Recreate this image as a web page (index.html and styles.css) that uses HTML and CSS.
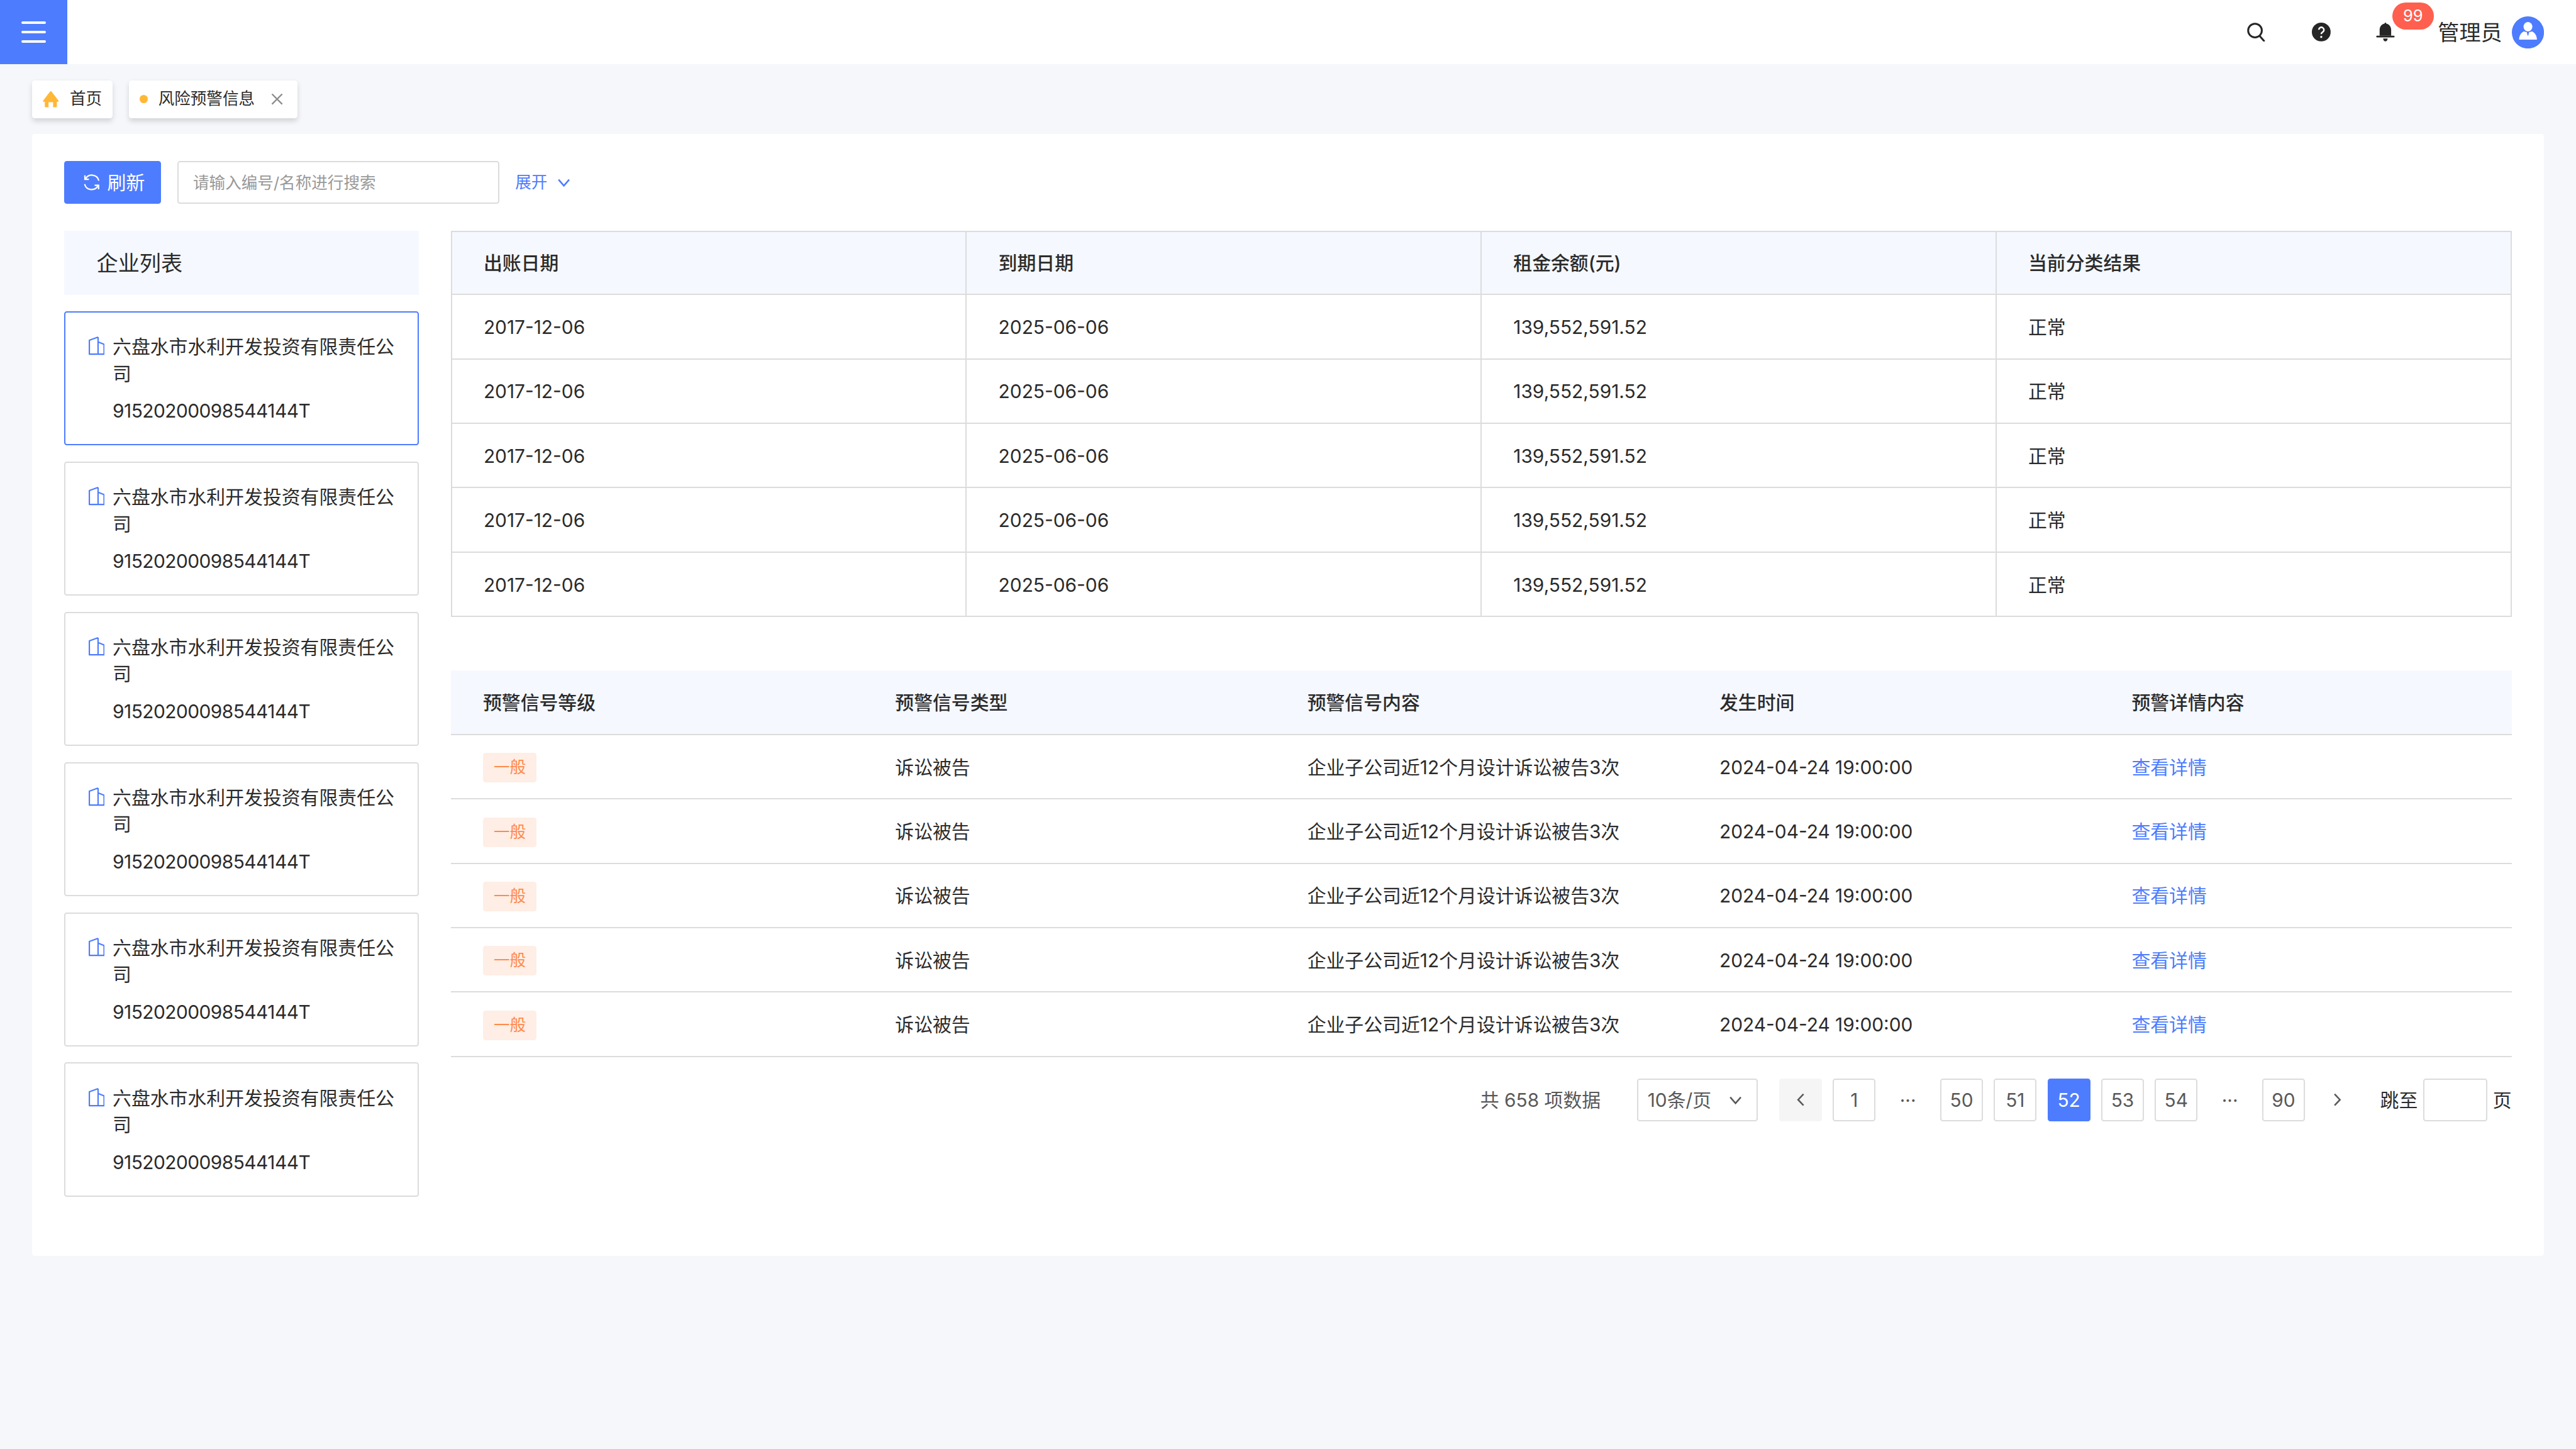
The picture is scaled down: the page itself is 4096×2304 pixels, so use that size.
FILE: index.html
```html
<!DOCTYPE html>
<html lang="zh-CN">
<head>
<meta charset="utf-8">
<title>风险预警信息</title>
<link rel="stylesheet" href="styles.css">
</head>
<body>
<header class="topbar">
  <button class="menu-btn" aria-label="菜单"><i></i><i></i><i></i></button>
  <div class="top-tools">
    <svg class="ic14" viewBox="0 0 14 14"><circle cx="5.9" cy="5.9" r="5.1" fill="none" stroke="#262626" stroke-width="1.4"/><path d="M9.4 10l3.2 3.6" fill="none" stroke="#262626" stroke-width="1.4" stroke-linecap="round"/></svg>
    <svg class="ic14" viewBox="0 0 14 14"><circle cx="7" cy="7" r="7" fill="#262626"/><path d="M5.2 5.3a1.9 1.9 0 1 1 2.9 1.7c-.7.4-1.1.8-1.1 1.5" fill="none" stroke="#fff" stroke-width="1.2"/><circle cx="7" cy="10.7" r=".8" fill="#fff"/></svg>
    <span class="bell">
      <svg class="ic14" viewBox="0 0 14 14"><path d="M7 0c.4 0 .6.3.6.7C9.900 1.200 11.300 3 11.300 5.400V9.700H2.700V5.400C2.700 3 4.100 1.200 6.400.7 6.400.3 6.600 0 7 0z" fill="#262626"/><rect x=".2" y="9.700" width="13.600" height="1.300" rx=".6" fill="#262626"/><path d="M5.300 11.800h3.400C8.500 13.100 7.900 14 7 14s-1.500-.9-1.700-2.200z" fill="#262626"/></svg>
      <b class="badge">99</b>
    </span>
    <span class="user">管理员</span>
    <svg class="avatar" viewBox="0 0 24 24"><circle cx="12" cy="12" r="12" fill="#4d7cfe"/><ellipse cx="12" cy="7.700" rx="3.300" ry="3.500" fill="#fff"/><path d="M5.400 17.400C5.400 14.500 6.800 12.200 9 11.300L11.200 11.800 11.700 14.300H12.300L12.800 11.800 15 11.300C17.200 12.200 18.700 14.500 18.700 17.400Z" fill="#fff"/></svg>
  </div>
</header>

<nav class="tabs">
  <a class="tab">
    <svg class="ic12" viewBox="0 0 12 12"><path d="M6 0c.3 0 .5.2.7.5L11.800 7.200c.2.300 0 .6-.3.6H10.500V11.400c0 .4-.2.6-.6.6H7.700V8.200H4.300V12H2.100c-.4 0-.6-.2-.6-.6V7.800H.5c-.3 0-.5-.3-.3-.6L5.300.5C5.500.2 5.700 0 6 0z" fill="#ffb836"/></svg>
    <span>首页</span>
  </a>
  <a class="tab tab-risk">
    <i class="dot"></i>
    <span>风险预警信息</span>
    <svg class="ic-x" viewBox="0 0 9 9"><path d="M.7.700l7.600 7.600M8.300.700L.7 8.300" stroke="#8c8c8c" stroke-width="1.100" fill="none"/></svg>
  </a>
</nav>

<main class="panel">
  <div class="toolbar">
    <button class="btn-primary">
      <svg class="ic-refresh" viewBox="0 0 14 14"><path d="M1.900 4.400A5.800 5.800 0 0 1 12.700 5.600M12.100 9.600A5.800 5.800 0 0 1 1.300 8.400" fill="none" stroke="#fff" stroke-width="1.100"/><path d="M1.500 1.400V4.600H4.700M12.500 12.600V9.400H9.300" fill="none" stroke="#fff" stroke-width="1.100"/></svg>
      <span>刷新</span>
    </button>
    <input class="search" placeholder="请输入编号/名称进行搜索">
    <a class="expand">展开<svg class="ic-chev" viewBox="0 0 8 6"><path d="M.5 1l3.500 4 3.500-4" fill="none" stroke="#4d7cfe" stroke-width="1.100"/></svg></a>
  </div>

  <div class="body">
    <aside class="side">
      <h2 class="side-title">企业列表</h2>
      <article class="card active">
        <svg class="ic-build" viewBox="0 0 12 14"><path d="M7 .5L.5 2.800V13.200H11.500V5.900L7.400 4.200M7 .5V13.200" fill="none" stroke="#4d7cfe" stroke-width="1" stroke-linejoin="round"/></svg>
        <div class="card-text"><p class="card-name">六盘水市水利开发投资有限责任公司</p><p class="card-code">91520200098544144T</p></div>
      </article>
      <article class="card">
        <svg class="ic-build" viewBox="0 0 12 14"><path d="M7 .5L.5 2.800V13.200H11.500V5.900L7.400 4.200M7 .5V13.200" fill="none" stroke="#4d7cfe" stroke-width="1" stroke-linejoin="round"/></svg>
        <div class="card-text"><p class="card-name">六盘水市水利开发投资有限责任公司</p><p class="card-code">91520200098544144T</p></div>
      </article>
      <article class="card">
        <svg class="ic-build" viewBox="0 0 12 14"><path d="M7 .5L.5 2.800V13.200H11.500V5.900L7.400 4.200M7 .5V13.200" fill="none" stroke="#4d7cfe" stroke-width="1" stroke-linejoin="round"/></svg>
        <div class="card-text"><p class="card-name">六盘水市水利开发投资有限责任公司</p><p class="card-code">91520200098544144T</p></div>
      </article>
      <article class="card">
        <svg class="ic-build" viewBox="0 0 12 14"><path d="M7 .5L.5 2.800V13.200H11.500V5.900L7.400 4.200M7 .5V13.200" fill="none" stroke="#4d7cfe" stroke-width="1" stroke-linejoin="round"/></svg>
        <div class="card-text"><p class="card-name">六盘水市水利开发投资有限责任公司</p><p class="card-code">91520200098544144T</p></div>
      </article>
      <article class="card">
        <svg class="ic-build" viewBox="0 0 12 14"><path d="M7 .5L.5 2.800V13.200H11.500V5.900L7.400 4.200M7 .5V13.200" fill="none" stroke="#4d7cfe" stroke-width="1" stroke-linejoin="round"/></svg>
        <div class="card-text"><p class="card-name">六盘水市水利开发投资有限责任公司</p><p class="card-code">91520200098544144T</p></div>
      </article>
      <article class="card">
        <svg class="ic-build" viewBox="0 0 12 14"><path d="M7 .5L.5 2.800V13.200H11.500V5.900L7.400 4.200M7 .5V13.200" fill="none" stroke="#4d7cfe" stroke-width="1" stroke-linejoin="round"/></svg>
        <div class="card-text"><p class="card-name">六盘水市水利开发投资有限责任公司</p><p class="card-code">91520200098544144T</p></div>
      </article>
    </aside>

    <section class="content">
      <table class="grid bordered">
        <thead><tr><th>出账日期</th><th>到期日期</th><th>租金余额(元)</th><th>当前分类结果</th></tr></thead>
        <tbody>
          <tr><td>2017-12-06</td><td>2025-06-06</td><td>139,552,591.52</td><td>正常</td></tr>
          <tr><td>2017-12-06</td><td>2025-06-06</td><td>139,552,591.52</td><td>正常</td></tr>
          <tr><td>2017-12-06</td><td>2025-06-06</td><td>139,552,591.52</td><td>正常</td></tr>
          <tr><td>2017-12-06</td><td>2025-06-06</td><td>139,552,591.52</td><td>正常</td></tr>
          <tr><td>2017-12-06</td><td>2025-06-06</td><td>139,552,591.52</td><td>正常</td></tr>
        </tbody>
      </table>

      <table class="grid lined">
        <thead><tr><th>预警信号等级</th><th>预警信号类型</th><th>预警信号内容</th><th>发生时间</th><th>预警详情内容</th></tr></thead>
        <tbody>
          <tr><td><span class="tag">一般</span></td><td>诉讼被告</td><td>企业子公司近12个月设计诉讼被告3次</td><td>2024-04-24 19:00:00</td><td><a class="link">查看详情</a></td></tr>
          <tr><td><span class="tag">一般</span></td><td>诉讼被告</td><td>企业子公司近12个月设计诉讼被告3次</td><td>2024-04-24 19:00:00</td><td><a class="link">查看详情</a></td></tr>
          <tr><td><span class="tag">一般</span></td><td>诉讼被告</td><td>企业子公司近12个月设计诉讼被告3次</td><td>2024-04-24 19:00:00</td><td><a class="link">查看详情</a></td></tr>
          <tr><td><span class="tag">一般</span></td><td>诉讼被告</td><td>企业子公司近12个月设计诉讼被告3次</td><td>2024-04-24 19:00:00</td><td><a class="link">查看详情</a></td></tr>
          <tr><td><span class="tag">一般</span></td><td>诉讼被告</td><td>企业子公司近12个月设计诉讼被告3次</td><td>2024-04-24 19:00:00</td><td><a class="link">查看详情</a></td></tr>
        </tbody>
      </table>

      <div class="pager">
        <span class="total">共 658 项数据</span>
        <div class="size">10条/页<svg class="ic-chev" viewBox="0 0 8 6"><path d="M.5 1l3.500 4 3.500-4" fill="none" stroke="#595959" stroke-width="1.100"/></svg></div>
        <a class="pg pg-off"><svg class="ic-arrow" viewBox="0 0 6 10"><path d="M5 .8L1 5l4 4.200" fill="none" stroke="#595959" stroke-width="1.200"/></svg></a>
        <a class="pg">1</a>
        <span class="pg pg-more">···</span>
        <a class="pg">50</a>
        <a class="pg">51</a>
        <a class="pg pg-on">52</a>
        <a class="pg">53</a>
        <a class="pg">54</a>
        <span class="pg pg-more">···</span>
        <a class="pg">90</a>
        <a class="pg pg-plain"><svg class="ic-arrow" viewBox="0 0 6 10"><path d="M1 .8L5 5 1 9.200" fill="none" stroke="#595959" stroke-width="1.200"/></svg></a>
        <span class="jump">跳至</span>
        <input class="jump-input" aria-label="页码">
        <span class="jump-unit">页</span>
      </div>
    </section>
  </div>
</main>
</body>
</html>
```

FILE: styles.css
```css
html {
  zoom: 2.13333;
  background: #f5f7fb;
}
* { box-sizing: border-box; }
body {
  margin: 0;
  width: 1920px;
  min-height: 1080px;
  background: #f5f7fb;
  color: #2b2b2b;
  font: 14px/21px Inter, "Noto Sans CJK SC", sans-serif;
  overflow: hidden;
}
p, h2 { margin: 0; }
svg { display: block; flex: none; }

.topbar {
  height: 48px;
  background: #fff;
  display: flex;
  justify-content: space-between;
  align-items: center;
  padding-right: 24px;
}
.menu-btn {
  width: 50px;
  height: 48px;
  border: 0;
  padding: 0;
  background: #4d7cfe;
  display: flex;
  flex-direction: column;
  align-items: center;
  justify-content: center;
  gap: 5px;
}
.menu-btn i { display: block; width: 18px; height: 2px; border-radius: 1px; background: #fff; }
.top-tools { display: flex; align-items: center; gap: 34px; }
.ic14 { width: 14px; height: 14px; }
.bell { position: relative; display: block; }
.badge {
  position: absolute;
  left: 12px;
  top: -15px;
  width: 31px;
  height: 20px;
  border-radius: 10px;
  background: #ff5f4e;
  color: #fff;
  font-size: 12px;
  font-weight: 400;
  line-height: 20px;
  text-align: center;
}
.user { font-size: 16px; line-height: 24px; margin: 0 -27px 0 -2px; }
.avatar { width: 24px; height: 24px; }

.tabs { height: 52px; padding: 12px 0 12px 24px; display: flex; gap: 12px; }
.tab {
  height: 28px;
  background: #fff;
  border-radius: 2px;
  box-shadow: 0 2px 4px rgba(0, 0, 0, .14);
  display: flex;
  align-items: center;
  padding: 0 8px;
  gap: 8px;
  font-size: 12px;
}
.ic12 { width: 12px; height: 12px; }
.tab-risk { padding: 0 11px 0 8px; }
.dot { width: 6px; height: 6px; border-radius: 50%; background: #ffb836; }
.ic-x { width: 9px; height: 9px; margin-left: 4px; }

.panel {
  width: 1872px;
  height: 836px;
  margin-left: 24px;
  background: #fff;
  border-radius: 2px;
  padding: 20px 24px;
}
.toolbar { display: flex; align-items: center; height: 32px; gap: 12px; }
.btn-primary {
  width: 72px;
  height: 32px;
  border: 0;
  border-radius: 2px;
  background: #4d7cfe;
  color: #fff;
  display: flex;
  align-items: center;
  gap: 5px;
  padding: 0 0 0 14px;
  font: inherit;
}
.ic-refresh { width: 13px; height: 14px; }
.search {
  width: 240px;
  height: 32px;
  border: 1px solid #dcdcdc;
  border-radius: 2px;
  padding: 0 11px;
  font: 12px Inter, "Noto Sans CJK SC", sans-serif;
  color: #262626;
  outline: 0;
}
.search::placeholder { color: #999; opacity: 1; }
.expand { display: flex; align-items: center; gap: 8px; color: #4d7cfe; font-size: 12px; }
.ic-chev { width: 9px; height: 7px; }

.body { display: flex; gap: 24px; margin-top: 20px; }
.side { width: 264px; display: flex; flex-direction: column; gap: 12px; }
.side-title {
  height: 48px;
  background: #f5f8ff;
  padding: 1px 0 0 24px;
  font-size: 16px;
  font-weight: 400;
  line-height: 47px;
}
.card {
  height: 100px;
  border: 1px solid #dcdcdc;
  border-radius: 2px;
  padding: 15.5px 16px 0 17px;
  display: flex;
  gap: 6px;
}
.card.active { border-color: #4d7cfe; }
.ic-build { width: 12px; height: 14px; margin-top: 2.5px; }
.card-text { flex: 1; min-width: 0; }
.card-name { line-height: 20px; }
.card-code { margin-top: 7.5px; letter-spacing: -.25px; }

.content { flex: 1; min-width: 0; }
.grid { width: 100%; table-layout: fixed; border-collapse: separate; border-spacing: 0; }
.grid th, .grid td { height: 48px; padding: 1px 24px 0; text-align: left; }
.grid th { background: #f5f8ff; font-weight: 500; }
.bordered { border-top: 1px solid #dcdcdc; border-left: 1px solid #dcdcdc; }
.bordered th, .bordered td { border-right: 1px solid #dcdcdc; border-bottom: 1px solid #dcdcdc; padding-left: 23.5px; }
.bordered th { height: 47px; padding-top: 0; }
.lined { margin-top: 40px; }
.lined th, .lined td { border-bottom: 1px solid #dcdcdc; }
.tag {
  display: inline-block;
  vertical-align: middle;
  height: 22px;
  padding: 0 8px;
  border-radius: 2px;
  background: #ffeee5;
  color: #ff8a4c;
  font-size: 12px;
  line-height: 22px;
}
.link { color: #4d7cfe; }

.pager {
  display: flex;
  justify-content: flex-end;
  align-items: center;
  gap: 8px;
  margin-top: 16px;
  color: #595959;
}
.total { margin-right: 19px; }
.size {
  width: 90px;
  height: 32px;
  border: 1px solid #dcdcdc;
  border-radius: 2px;
  padding: 0 11px 0 7px;
  display: flex;
  align-items: center;
  justify-content: space-between;
  margin-right: 8px;
}
.pg {
  width: 32px;
  height: 32px;
  border: 1px solid #dcdcdc;
  border-radius: 2px;
  display: flex;
  align-items: center;
  justify-content: center;
}
.pg-off { background: #f5f5f5; border-color: #f5f5f5; }
.pg-more, .pg-plain { border-color: transparent; }
.pg-on { background: #4d7cfe; border-color: #4d7cfe; color: #fff; }
.ic-arrow { width: 6px; height: 10px; }
.jump { color: #2b2b2b; margin-left: 8px; margin-right: -4px; }
.jump-input {
  width: 48px;
  height: 32px;
  border: 1px solid #dcdcdc;
  border-radius: 2px;
  outline: 0;
}
.jump-unit { color: #2b2b2b; margin-left: -4px; }
```
